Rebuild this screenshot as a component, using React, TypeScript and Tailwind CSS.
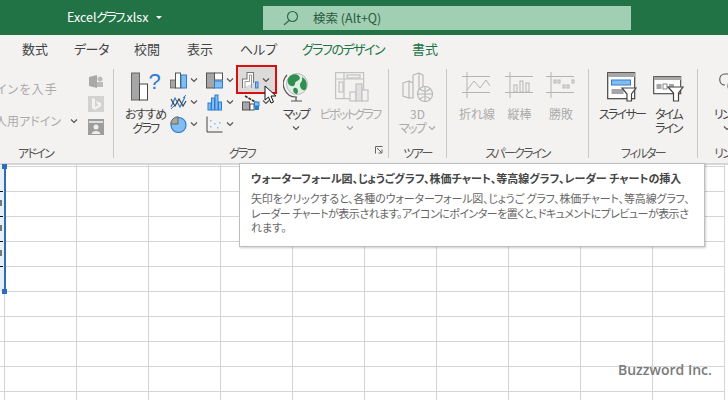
import React from "react";

const Chev = ({ c = "#555" }: { c?: string }) => (
  <svg width="8" height="6" viewBox="0 0 8 6" className="shrink-0"><path d="M1 1.5 4 4.5 7 1.5" fill="none" stroke={c} strokeWidth="1.2" /></svg>
);

const G = "#a6a6a6", B = "#2b7cd3", L = "#83bdee", D = "#555";

const icons: React.ReactNode[] = [
  <svg width="17" height="17" viewBox="0 0 17 17"><rect x=".5" y="8" width="5" height="8" fill={G} stroke={D} strokeWidth=".7" /><rect x="5.5" y="1" width="5" height="15" fill="#fff" stroke={D} /><rect x="11" y="3" width="5.5" height="13" fill={L} stroke={B} /></svg>,
  <svg width="17" height="17" viewBox="0 0 17 17"><rect x=".5" y="1" width="8" height="15" fill={G} stroke={D} /><rect x="8.5" y="1" width="8" height="7" fill="#fff" stroke={D} /><rect x="8.5" y="9" width="8" height="7" fill={L} stroke={B} /></svg>,
  <svg width="19" height="18" viewBox="0 0 19 18" fill="none"><path d="M1.500 17V8H6V1.500H12.500V12" fill="#fff" stroke="#777" strokeWidth="1.1" /><path d="M4 17V10.500H8.500V4H10.500V17" stroke="#999" strokeWidth="1" /><rect x="14.500" y="11" width="2.500" height="6" fill={L} stroke={B} /></svg>,
  <svg width="17" height="17" viewBox="0 0 17 17" fill="none"><path d="M1 13 5 4 10 13 15 3" stroke={B} strokeWidth="1.2" /><path d="M1 5 5 12 9 5 13 12 16 7" stroke="#444" strokeWidth="1.2" /><path d="M1 15 4 12M13 4 16 1" stroke={B} /></svg>,
  <svg width="15" height="17" viewBox="0 0 15 17"><rect x="1" y="9" width="3" height="7" fill={L} stroke={B} /><rect x="4.5" y="4" width="3" height="12" fill={L} stroke={B} /><rect x="8" y="1" width="3" height="15" fill={L} stroke={B} /><rect x="11.5" y="8" width="3" height="8" fill={L} stroke={B} /></svg>,
  <svg width="18" height="17" viewBox="0 0 18 17"><path d="M3 2 15 9" stroke="#333" strokeWidth="1.6" strokeDasharray="3 1" /><rect x=".5" y="8" width="7" height="8" fill={G} stroke={D} /><rect x="8" y="10" width="4" height="6" fill="#fff" stroke={D} /><rect x="12.5" y="8" width="4.5" height="4" fill={L} stroke={B} /><rect x="12.5" y="12" width="4.5" height="4" fill={B} /></svg>,
  <svg width="17" height="17" viewBox="0 0 17 17"><circle cx="8.5" cy="9" r="7.5" fill={L} stroke={B} strokeWidth="1.2" /><path d="M8 8V.7A7.5 7.5 0 0 0 .7 8Z" fill={G} stroke={D} strokeWidth=".8" /></svg>,
  <svg width="17" height="17" viewBox="0 0 17 17"><path d="M1 .5V16H16.5" fill="none" stroke="#444" /><g fill={L}><rect x="4" y="4" width="1.5" height="1.5" /><rect x="4" y="10" width="1.5" height="1.5" /><rect x="8" y="7" width="1.5" height="1.5" /><rect x="11" y="11" width="1.5" height="1.5" /><rect x="13" y="6" width="1.5" height="1.5" /></g></svg>,
];

const Group = ({ w, label, pr = 0, pl = 0, left = false, children, last = false }: { w: string; label: string; pr?: number; pl?: number; left?: boolean; children: React.ReactNode; last?: boolean }) => (
  <div className={`${w} relative flex h-[89px] shrink-0 flex-col ${last ? "" : "border-r border-[#c8c8c8]"}`}>
    <div className="flex h-[76px] shrink-0 items-start">{children}</div>
    <div className={`h-[13px] whitespace-nowrap text-[12px] leading-[16px] tracking-[-1.7px] text-[#555] ${left ? "text-left" : "text-center"}`} style={{ paddingRight: pr, paddingLeft: pl }}>{label}</div>
  </div>
);

const Btn = ({ w, icon, text, gray = false, chev = false }: { w: string; icon: React.ReactNode; text: React.ReactNode; gray?: boolean; chev?: boolean }) => (
  <div className={`${w} flex shrink-0 flex-col items-center`}>
    <div className="flex h-[38px] items-start justify-center pt-[3px]">{icon}</div>
    <div className={`whitespace-nowrap text-center text-[12px] leading-[14px] ${gray ? "text-[#ababab]" : "text-[#444]"}`}>{text}</div>
    {chev && <div className="flex h-[14px] items-center"><Chev c={gray ? "#aaa" : "#555"} /></div>}
  </div>
);

const Spark = ({ kind }: { kind: number }) => (
  <svg width="30" height="26" viewBox="0 0 30 26" fill="none" stroke="#b4b4b4">
    <path d="M0 4.5H28M0 20.5H28M5 0V26" />
    {kind === 0 && <path d="M5 18 12 9 18 16 24 8 28 14" />}
    {kind === 1 && <><rect x="9" y="13" width="3" height="7" /><rect x="15" y="9" width="3" height="11" /><rect x="21" y="11" width="3" height="9" /></>}
    {kind === 2 && <><rect x="8" y="8" width="2" height="3" /><rect x="12" y="8" width="2" height="3" /><rect x="17" y="13" width="2" height="3" /><rect x="21" y="13" width="2" height="3" /><rect x="26" y="8" width="2" height="3" /></>}
  </svg>
);

const Globe = () => (
  <svg width="26" height="30" viewBox="0 0 26 30">
    <path d="M4 3A13 13 0 0 0 14 25M8 29H19M13 25V29" fill="none" stroke="#555" strokeWidth="1.2" />
    <circle cx="14" cy="12" r="10.500" fill="#dfeee4" stroke="#999" strokeWidth=".6" />
    <path d="M7 4C11 1 16 2 17 6 16 10 12 8 12 12 11 16 6 14 5 11 4 8 5 6 7 4ZM19 5C23 7 25 12 23 17 21 20 17 17 17 13 17 10 20 10 19 5ZM11 16C15 15 16 20 14 22 11 22 9 18 11 16Z" fill="#2f8f4e" />
  </svg>
);

const Pivot = () => (
  <svg width="34" height="30" viewBox="0 0 34 30" fill="none" stroke="#c2c2c2" strokeWidth="1.2">
    <rect x=".6" y=".6" width="28" height="26" />
    <path d="M.6 7H28.6M9 .6V27" />
    <rect x="4" y="10" width="4" height="10" />
    <rect x="12" y="3" width="13" height="3" />
    <rect x="15" y="20" width="6" height="9" fill="#f3f2f1" />
    <rect x="21" y="12" width="6" height="17" fill="#e0e0e0" />
    <rect x="27" y="18" width="6" height="11" fill="#f3f2f1" />
  </svg>
);

const ThreeD = () => (
  <svg width="32" height="30" viewBox="0 0 32 30" fill="none" stroke="#b4b4b4" strokeWidth="1.1">
    <path d="M1 11 7 9V26L1 24ZM7 9 11 11V26H7M11 3 17 1 21 3V18M11 3V26M17 1V20" />
    <circle cx="23" cy="22" r="7.5" fill="#f3f2f1" />
    <path d="M15.5 22H30.5M23 14.5V29.5M18 17C21 20 25 20 28 17M18 27C21 24 25 24 28 27" />
  </svg>
);

const Slicer = () => (
  <svg width="30" height="30" viewBox="0 0 30 30">
    <rect x=".7" y=".7" width="27" height="26" fill="#fff" stroke="#444" strokeWidth="1.2" />
    <rect x="1" y="1" width="27" height="4" fill="#a6a6a6" />
    <rect x="4.5" y="8" width="19" height="5" fill={L} stroke={B} />
    <rect x="4.5" y="17" width="12" height="5" fill="#a6a6a6" />
    <path d="M15 16H29L24.5 22V29H20V22Z" fill="#fff" stroke="#444" strokeWidth="1.2" />
  </svg>
);

const Timeline = () => (
  <svg width="31" height="26" viewBox="0 0 31 26">
    <rect x=".7" y=".7" width="27" height="17" fill="#fff" stroke="#444" strokeWidth="1.1" />
    <rect x="1" y="1" width="27" height="3" fill="#a6a6a6" />
    <rect x="3.5" y="8" width="5" height="5" fill="#a6a6a6" /><rect x="10" y="8" width="4" height="5" fill="#fff" stroke="#888" /><rect x="16" y="8" width="5" height="5" fill="#a6a6a6" />
    <path d="M15 11H30L25.5 17V25H20.5V17Z" fill="#fff" stroke="#444" strokeWidth="1.2" />
  </svg>
);

const Cursor = () => (
  <svg width="14" height="20" viewBox="0 0 14 20"><path d="M1 1V15L4.5 12 7 18 9.5 17 7 11H12Z" fill="#fff" stroke="#111" strokeWidth="1" /></svg>
);

const K = ({ children }: { children: React.ReactNode }) => <span className="tracking-[-1.7px]">{children}</span>;

export default function App() {
  const font = { fontFamily: '"Noto Sans CJK JP","Noto Sans",sans-serif', fontFeatureSettings: '"palt"' };
  return (
    <div className="relative h-[400px] w-[728px] overflow-hidden bg-white" style={font}>
      {/* title bar */}
      <div className="flex h-[35px] items-start bg-[#217346]">
        <div className="flex h-[35px] w-[263px] items-center pl-[67px] text-[12.5px] text-white">
          <span>Excel<span className="tracking-[-2px]">グラフ</span>.xlsx</span>
          <svg width="6" height="4" viewBox="0 0 6 4" className="ml-[8px]"><path d="M0 0H6L3 3Z" fill="#fff" /></svg>
        </div>
        <div className="mt-[6px] flex h-[24px] w-[368px] items-center bg-[#a1cfb3] pl-[20px] text-[12.5px] text-[#2a5a40]">
          <svg width="16" height="16" viewBox="0 0 16 16" fill="none" stroke="#2f6b4a" strokeWidth="1.2"><circle cx="9.5" cy="6.5" r="5" /><path d="M6 10.5 1 15" /></svg>
          <span className="ml-[14px]">検索 (Alt+Q)</span>
        </div>
      </div>

      {/* ribbon */}
      <div className="h-[128px] bg-[#f3f2f1]">
        <div className="flex h-[27px] items-center whitespace-nowrap text-[13px] text-[#444]">
          <span className="ml-[22px] w-[52px]">数式</span>
          <span className="w-[60px] tracking-[-0.5px]">データ</span>
          <span className="w-[53px]">校閲</span>
          <span className="w-[53px]">表示</span>
          <span className="w-[62px]">ヘルプ</span>
          <span className="w-[110px] tracking-[-1.5px] text-[#217346]">グラフのデザイン</span>
          <span className="text-[#217346]">書式</span>
        </div>
        <div className="flex pt-[7px]">
          {/* add-ins */}
          <Group w="w-[114px]" label="アドイン" pr={42}>
            <div className="flex w-[83px] flex-col items-end overflow-hidden pt-[12px] text-[12px] text-[#ababab]">
              <div className="mr-[25px] h-[32px] whitespace-nowrap leading-[16px] tracking-[1.2px]">ドインを入手</div>
              <div className="flex items-center whitespace-nowrap leading-[16px]"><span className="mr-[9px]">個人用アドイン</span><Chev /><span className="w-[5px]" /></div>
            </div>
            <div className="ml-[5px] flex flex-col items-center gap-[7px] pt-[5px]">
              <svg width="15" height="15" viewBox="0 0 15 15"><path d="M0 3 8 1V14L0 12Z" fill="#a8a8a8" /><circle cx="11" cy="5" r="2.5" fill="#bbb" /><rect x="8" y="8" width="6" height="5" fill="#bbb" /></svg>
              <svg width="16" height="16" viewBox="0 0 16 16"><rect width="16" height="16" fill="#d2d2d2" /><path d="M4 2 7 3V11L11 9 9 8 8 5 13 7V10L7 14 4 12Z" fill="#f3f2f1" /></svg>
              <svg width="16" height="16" viewBox="0 0 16 16"><rect width="16" height="16" fill="#9d9d9d" /><rect x="1" y="2" width="14" height="2" fill="#ddd" /><circle cx="8" cy="8" r="2.5" fill="#eee" /><path d="M3.5 15C4 11 12 11 12.500 15Z" fill="#eee" /></svg>
            </div>
          </Group>

          {/* charts */}
          <Group w="w-[275px]" label="グラフ" pr={18}>
            <Btn
              w="ml-[8px] w-[47px]"
              icon={
                <svg width="30" height="30" viewBox="0 0 30 30">
                  <rect x=".5" y="1" width="8" height="27" fill={G} stroke="#666" />
                  <rect x="8.500" y="12" width="8" height="16" fill="#fff" stroke="#444" />
                  <text x="17.500" y="17" fontSize="22" fill={B} fontFamily="Liberation Sans">?</text>
                </svg>
              }
              text={<><span className="tracking-[-1px]">おすすめ</span><br /><K>グラフ</K></>}
            />
            <div className="grid w-[108px] grid-cols-3 grid-rows-[22px_22px_22px]">
              {icons.map((ic, i) => (
                <div key={i} className="relative flex h-[22px] items-center gap-[2px]">
                  {i === 2 && <div className="absolute left-[-5px] top-[-4px] h-[29px] w-[41px] border-2 border-[#d80f0f] bg-[#dcdbda]" />}
                  <div className="relative flex w-[19px] justify-center">{ic}</div>
                  <div className="relative"><Chev /></div>
                  {i === 5 && <div className="absolute left-[23px] top-[-6px]"><Cursor /></div>}
                </div>
              ))}
            </div>
            <Btn w="w-[38px]" icon={<Globe />} text={<K>マップ</K>} chev />
            <Btn w="w-[70px]" gray icon={<div className="pl-[4px]"><Pivot /></div>} text={<K>ピボットグラフ</K>} chev />
            <svg width="8" height="8" viewBox="0 0 8 8" className="absolute bottom-[4px] right-[5px]" fill="none" stroke="#666"><path d="M.5 7.500V.5H7.500" /><path d="M2 2 6.500 6.500M3.500 7H7V3.500" /></svg>
          </Group>

          {/* tour */}
          <Group w="w-[58px]" label="ツアー">
            <Btn w="w-[57px]" gray icon={<ThreeD />} text={<>3D<br /><span className="inline-flex items-center gap-[3px]"><K>マップ</K><Chev c="#aaa" /></span></>} />
          </Group>

          {/* sparkline */}
          <Group w="w-[142px]" label="スパークライン">
            <div className="flex pl-[8px]">
              <Btn w="w-[44px]" gray icon={<Spark kind={0} />} text="折れ線" />
              <Btn w="w-[41px]" gray icon={<Spark kind={1} />} text="縦棒" />
              <Btn w="w-[42px]" gray icon={<Spark kind={2} />} text="勝敗" />
            </div>
          </Group>

          {/* filter */}
          <Group w="w-[109px]" label="フィルター">
            <div className="flex pl-[8px]">
              <Btn w="w-[50px]" icon={<Slicer />} text={<K>スライサー</K>} />
              <Btn w="w-[43px]" icon={<div className="pt-[4px]"><Timeline /></div>} text={<><K>タイム</K><br /><K>ライン</K></>} />
            </div>
          </Group>

          {/* links */}
          <Group w="w-[31px]" label="リンク" left pl={16} last>
            <Btn
              w="ml-[15px] w-[28px]"
              icon={<div className="pl-[14px]"><svg width="30" height="22" viewBox="0 0 30 22" fill="none" stroke="#555" strokeWidth="1.1"><path d="M12 2H6C-1 2 -1 13 6 13" /><circle cx="16" cy="14" r="7" /><path d="M12 14H20" /></svg></div>}
              text={<K>リンク</K>}
              chev
            />
          </Group>
        </div>
      </div>

      {/* sheet */}
      <div className="grid h-[237px] grid-cols-[5px_repeat(10,72px)] grid-rows-[2px_repeat(10,25px)] border-t-2 border-[#d6d6d6]">
        {Array.from({ length: 121 }).map((_, i) => (
          <div key={i} className="border-b border-r border-[#d4d4d4]" />
        ))}
      </div>

      {/* selected chart edge */}
      <div className="absolute left-0 top-[166px] h-[126px] w-[4px] bg-[#e4f1fb]">
        {[25, 50, 75, 100].map((y) => (
          <div key={y} className="absolute left-0 h-px w-[3px] bg-[#111]" style={{ top: y }} />
        ))}
        {[34, 59, 84].map((y) => (
          <div key={y} className="absolute left-0 h-[6px] w-[2px] bg-[#777]" style={{ top: y }} />
        ))}
      </div>
      <div className="absolute left-[4px] top-[166px] h-[125px] w-[2px] bg-[#2f6cbb]" />
      <div className="absolute left-[2px] top-[164px] h-[5px] w-[5px] bg-[#2f6cbb]" />
      <div className="absolute left-[2px] top-[289px] h-[5px] w-[5px] bg-[#2f6cbb]" />

      {/* tooltip */}
      <div className="absolute left-[239px] top-[163px] h-[84px] w-[466px] border border-[#bdbdbd] bg-white pl-[11px] pt-[6px] shadow-[1px_1px_2px_rgba(0,0,0,0.2)]">
        <div className="whitespace-nowrap text-[11px] font-bold leading-[17px] text-[#444]">ウォーターフォール図、じょうごグラフ、株価チャート、等高線グラフ、レーダー チャートの挿入</div>
        <div className="mt-[4px] text-[11px] leading-[14.5px] text-[#666]">
          <div className="whitespace-nowrap tracking-[-0.15px]">矢印をクリックすると、各種のウォーターフォール図、じょうご グラフ、株価チャート、等高線グラフ、</div>
          <div className="whitespace-nowrap tracking-[-0.55px]">レーダー チャートが表示されます。アイコンにポインターを置くと、ドキュメントにプレビューが表示さ</div>
          <div className="whitespace-nowrap">れます。</div>
        </div>
      </div>

      {/* watermark */}
      <div className="absolute left-[618px] top-[359px] whitespace-nowrap text-[14px] font-semibold leading-[22px] text-[#7a7a7a]" style={{ fontFamily: '"Open Sans",sans-serif' }}>Buzzword Inc.</div>
    </div>
  );
}
